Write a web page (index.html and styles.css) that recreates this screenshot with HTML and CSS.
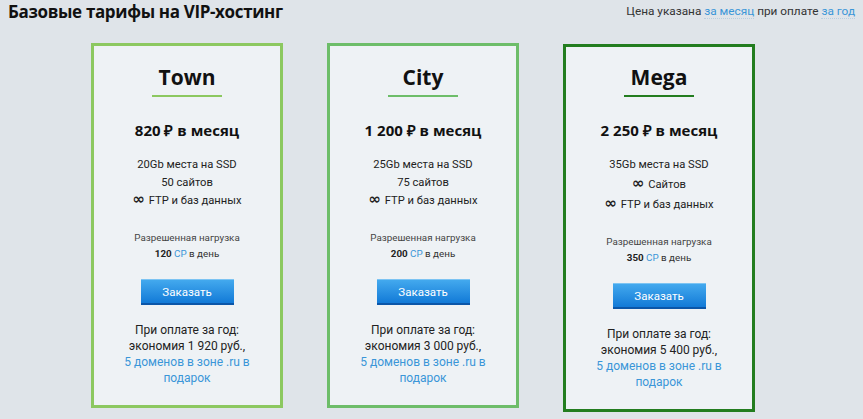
FILE: index.html
```html
<!DOCTYPE html>
<html lang="ru">
<head>
<meta charset="utf-8">
<title>Базовые тарифы на VIP-хостинг</title>
<link rel="stylesheet" href="styles.css">
</head>
<body>
<header class="top">
  <h1 class="page-title">Базовые тарифы на VIP-хостинг</h1>
  <div class="price-note">Цена указана <a class="dotted" href="#">за месяц</a> при оплате <a class="dotted" href="#">за год</a></div>
</header>
<main class="plans">
  <section class="card card-town">
    <h2 class="card-title">Town</h2>
    <div class="bar"></div>
    <div class="price">820 ₽ в месяц</div>
    <ul class="features">
      <li>20Gb места на SSD</li>
      <li>50 сайтов</li>
      <li class="inf-line"><span class="inf">∞</span> FTP и баз данных</li>
    </ul>
    <div class="load">
      <div class="load-label">Разрешенная нагрузка</div>
      <div class="load-value"><b>120</b> <a href="#">CP</a> в день</div>
    </div>
    <button class="order">Заказать</button>
    <p class="yearly">При оплате за год:<br>экономия 1 920 руб.,<br><a href="#">5 доменов в зоне .ru в подарок</a></p>
  </section>
  <section class="card card-city">
    <h2 class="card-title">City</h2>
    <div class="bar"></div>
    <div class="price">1 200 ₽ в месяц</div>
    <ul class="features">
      <li>25Gb места на SSD</li>
      <li>75 сайтов</li>
      <li class="inf-line"><span class="inf">∞</span> FTP и баз данных</li>
    </ul>
    <div class="load">
      <div class="load-label">Разрешенная нагрузка</div>
      <div class="load-value"><b>200</b> <a href="#">CP</a> в день</div>
    </div>
    <button class="order">Заказать</button>
    <p class="yearly">При оплате за год:<br>экономия 3 000 руб.,<br><a href="#">5 доменов в зоне .ru в подарок</a></p>
  </section>
  <section class="card card-mega">
    <h2 class="card-title">Mega</h2>
    <div class="bar"></div>
    <div class="price">2 250 ₽ в месяц</div>
    <ul class="features features-mega">
      <li>35Gb места на SSD</li>
      <li class="inf-line tall"><span class="inf">∞</span> Сайтов</li>
      <li class="inf-line"><span class="inf">∞</span> FTP и баз данных</li>
    </ul>
    <div class="load">
      <div class="load-label">Разрешенная нагрузка</div>
      <div class="load-value"><b>350</b> <a href="#">CP</a> в день</div>
    </div>
    <button class="order">Заказать</button>
    <p class="yearly">При оплате за год:<br>экономия 5 400 руб.,<br><a href="#">5 доменов в зоне .ru в подарок</a></p>
  </section>
</main>
</body>
</html>
```
FILE: styles.css
```css
* { box-sizing: border-box; }
html, body { margin: 0; padding: 0; }
body {
  width: 863px;
  height: 419px;
  overflow: hidden;
  background: #dfe4e9;
  font-family: "Roboto", "Open Sans", sans-serif;
  color: #222;
}
a { color: #3a96d8; text-decoration: none; }

.top {
  display: flex;
  justify-content: space-between;
  align-items: flex-start;
  padding: 0 8px 0 8px;
  height: 43px;
}
.page-title {
  margin: 1px 0 0 0;
  font-family: "Open Sans", sans-serif;
  font-size: 17px;
  line-height: 22px;
  font-weight: 700;
  color: #111;
  letter-spacing: -0.35px;
}
.price-note {
  margin-top: 2px;
  font-size: 11.8px;
  line-height: 18px;
  color: #333;
}
.dotted { border-bottom: 1px dotted #b9cfe0; }

.plans {
  display: flex;
  align-items: flex-start;
  gap: 44px;
  padding-left: 91px;
}
.card {
  width: 192px;
  border: 3px solid #8cc860;
  background: #eef2f5;
  text-align: center;
  padding: 17px 8px 19px;
  display: flex;
  flex-direction: column;
  align-items: center;
}
.card-city { border-color: #6dbd69; }
.card-mega { border-color: #237d1f; margin-top: 1px; padding-top: 16px; }

.card-title {
  margin: 0;
  font-family: "Open Sans", sans-serif;
  font-size: 21px;
  line-height: 28px;
  font-weight: 700;
  color: #111;
}
.bar {
  width: 70px;
  height: 2px;
  margin-top: 4px;
  background: #8cc860;
}
.card-city .bar { background: #6dbd69; }
.card-mega .bar { background: #237d1f; }

.price {
  margin-top: 23px;
  font-family: "Open Sans", sans-serif;
  font-size: 15px;
  line-height: 20px;
  font-weight: 700;
  color: #111;
}
.features {
  list-style: none;
  margin: 16px 0 0;
  padding: 0;
  font-size: 11.2px;
  line-height: 18px;
  color: #222;
}
.inf {
  font-family: "DejaVu Sans", sans-serif;
  font-size: 15px;
  line-height: 10px;
  font-weight: 700;
  color: #222;
  margin-right: 1px;
}
.features-mega .tall { line-height: 22px; }

.load { margin-top: 20px; }
.load-label {
  font-size: 9.8px;
  line-height: 16px;
  color: #444;
}
.load-value {
  font-size: 9.8px;
  line-height: 16px;
  color: #333;
}
.load-value b { color: #222; }

.order {
  margin-top: 17px;
  width: 93px;
  height: 26px;
  border: 0;
  border-top: 1px solid #7cc4f3;
  border-bottom: 2px solid #0b56a8;
  background: linear-gradient(#43a9ee, #127ad7);
  color: #fff;
  font-family: inherit;
  font-size: 11.5px;
  padding: 0;
  cursor: pointer;
}
.yearly {
  margin: 17px 0 0;
  font-size: 12px;
  line-height: 16px;
  color: #222;
  width: 150px;
}
```
